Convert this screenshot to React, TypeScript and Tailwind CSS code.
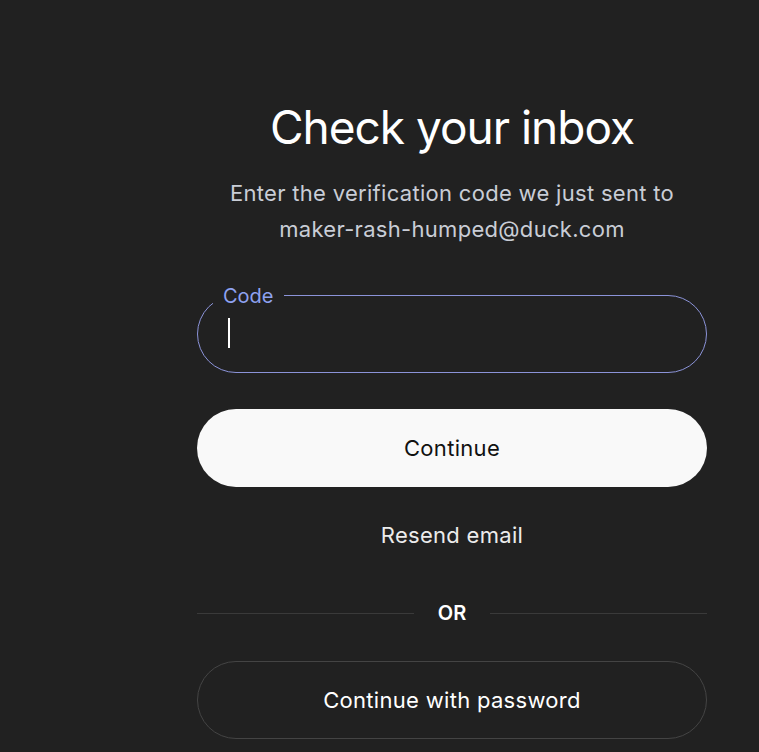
import { useState } from 'react';

export default function App() {
  const [code, setCode] = useState('');

  return (
    <div className="min-h-screen w-full bg-[#212121] font-['Inter',sans-serif] text-white">
      <div className="flex justify-center pl-[145px]">
        <div className="flex w-[510px] flex-col items-center pt-[98px]">
          <h1 className="text-[46px] font-normal leading-[58px] tracking-[-1px] text-white">
            Check your inbox
          </h1>
          <p className="mt-[19px] text-center text-[22px] leading-[36px] tracking-[0.3px] text-[#c9cdd6]">
            Enter the verification code we just sent to
            <br />
            maker-rash-humped@duck.com
          </p>

          {/* code field with notched outline */}
          <div className="relative mt-[48px] w-full">
            <label
              htmlFor="code"
              className="absolute -top-[11px] left-[16px] bg-[#212121] px-[10px] text-[20px] leading-[24px] text-[#8ea2f0]"
            >
              Code
            </label>
            <input
              id="code"
              value={code}
              onChange={(e) => setCode(e.target.value)}
              className="h-[78px] w-full rounded-full border border-[#8b93d8] bg-transparent px-[32px] text-[22px] text-white caret-white outline-none"
            />
            {code === '' && (
              <span className="pointer-events-none absolute left-[31px] top-[23px] h-[30px] w-[2px] bg-white" />
            )}
          </div>

          <button className="mt-[36px] h-[78px] w-full rounded-full bg-[#f9f9f9] text-[22px] tracking-[0.3px] text-[#111111]">
            Continue
          </button>

          <button className="mt-[36px] text-[22px] leading-[24px] tracking-[0.3px] text-[#ececec]">
            Resend email
          </button>

          <div className="mt-[51px] flex w-full items-center">
            <div className="h-px flex-1 bg-[#3a3a3a]" />
            <span className="px-[24px] text-[20px] font-semibold text-white">OR</span>
            <div className="h-px flex-1 bg-[#3a3a3a]" />
          </div>

          <button className="mt-[33px] h-[78px] w-full rounded-full border border-[#444444] text-[22px] tracking-[0.3px] text-white">
            Continue with password
          </button>
        </div>
      </div>
    </div>
  );
}
